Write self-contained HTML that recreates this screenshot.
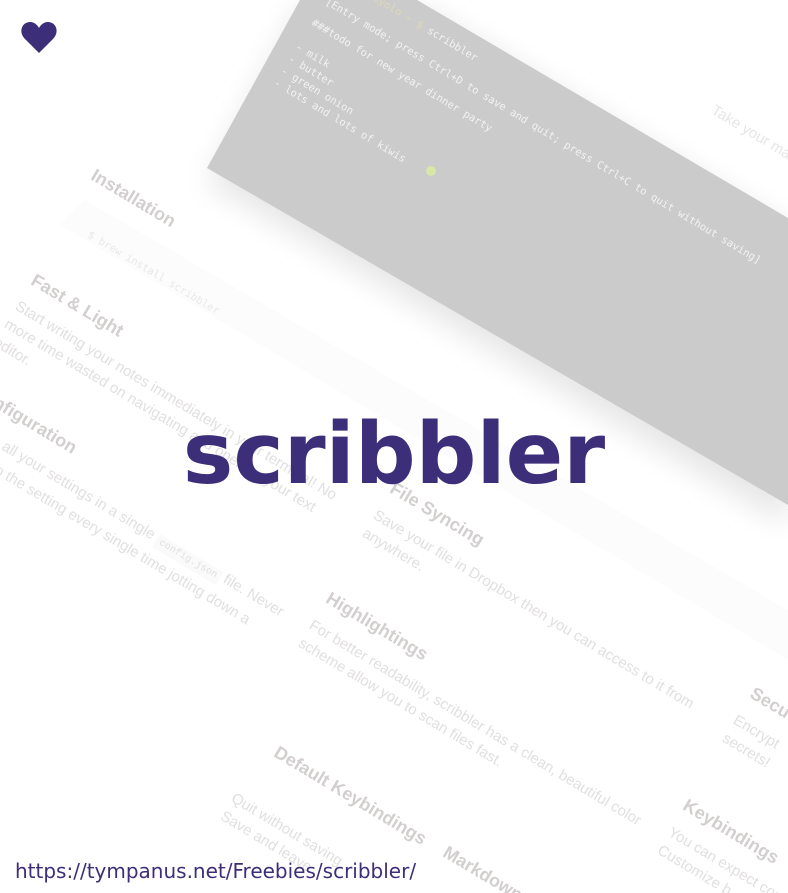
<!DOCTYPE html>
<html><head><meta charset="utf-8"><style>
html,body{margin:0;padding:0;width:788px;height:893px;overflow:hidden;background:#fff;position:relative;font-family:"Liberation Sans",sans-serif}
.r{position:absolute;transform-origin:0 0;transform:rotate(31deg);white-space:nowrap}
.h{font-size:18px;font-weight:bold;color:#d3cfcf}
.p{font-size:15px;color:#e2dfdf;line-height:21px}
.m{font-family:"DejaVu Sans Mono","Liberation Mono",monospace;font-size:10.5px;color:#f2f2f2;line-height:14px}
#title{position:absolute;left:0;width:788px;top:405px;text-align:center;font-family:"DejaVu Sans",sans-serif;font-weight:bold;font-size:85px;color:#3d2e7a}
#url{position:absolute;left:15px;top:859px;font-family:"DejaVu Sans",sans-serif;font-size:20px;color:#3d2e7a}
</style></head><body>
<svg width="788" height="893" style="position:absolute;left:0;top:0">
<defs><filter id="b" x="-20%" y="-20%" width="140%" height="140%"><feGaussianBlur stdDeviation="14"/></filter></defs>
<polygon points="207,182 300,8 420,8 788,228 788,525" fill="#e6e6e6" filter="url(#b)"/>
<polygon points="207,168 300,0 417,0 788,218 788,505" fill="#cbcbcb"/>
<polygon points="60,225 85,200 788,610 788,660" fill="#fcfcfc"/>
<circle cx="431" cy="171" r="5" fill="#d8e6a8"/>
<path d="M39 53 L25 39 C18 32 22 22 30 22 C35 22 38 26 39 28 C40 26 43 22 48 22 C56 22 60 32 53 39 Z" fill="#3d2e7a"/>
</svg>
<div class="r m" style="left:372px;top:-12px;color:#e0d8b8">rmyolo ~ $ <span style="color:#f2f2f2">scribbler</span></div>
<div class="r m" style="left:330px;top:-5px">[Entry mode; press Ctrl+D to save and quit; press Ctrl+C to quit without saving]</div>
<div class="r m" style="left:316px;top:16px">###todo for new year dinner party</div>
<div class="r m" style="left:300px;top:40px">- milk<br>- butter<br>- green onion<br>- lots and lots of kiwis</div>
<div class="r p" style="left:718px;top:100px;color:#e6e6e6">Take your ma</div>
<div class="r h" style="left:98px;top:165px">Installation</div>
<div class="r m" style="left:92px;top:228px;color:#e8e8e8">$ brew install scribbler</div>
<div class="r h" style="left:38px;top:270px">Fast &amp; Light</div>
<div class="r p" style="left:22px;top:296px">Start writing your notes immediately in your terminal! No<br>more time wasted on navigating and opening your text<br>editor.</div>
<div class="r h" style="left:0px;top:392px">nfiguration</div>
<div class="r p" style="left:-5px;top:428px">in all your settings in a single <span style="font-family:'Liberation Mono',monospace;font-size:10px;background:#fafafa;padding:2px 4px">config.json</span> file. Never<br>redo the setting every single time jotting down a</div>
<div class="r h" style="left:397px;top:478px">File Syncing</div>
<div class="r p" style="left:380px;top:505px">Save your file in Dropbox then you can access to it from<br>anywhere.</div>
<div class="r h" style="left:333px;top:588px">Highlightings</div>
<div class="r p" style="left:316px;top:615px">For better readability, scribbler has a clean, beautiful color<br>scheme allow you to scan files fast.</div>
<div class="r h" style="left:757px;top:683px">Secu</div>
<div class="r p" style="left:740px;top:710px">Encrypt<br>secrets!</div>
<div class="r h" style="left:281px;top:742px">Default Keybindings</div>
<div class="r p" style="left:238px;top:788px">Quit without saving<br>Save and leave</div>
<div class="r h" style="left:690px;top:795px">Keybindings</div>
<div class="r p" style="left:675px;top:822px">You can expect com<br>Customize b</div>
<div class="r h" style="left:450px;top:842px">Markdown</div>
<div id="title">scribbler</div>
<div id="url">https://tympanus.net/Freebies/scribbler/</div>
</body></html>
